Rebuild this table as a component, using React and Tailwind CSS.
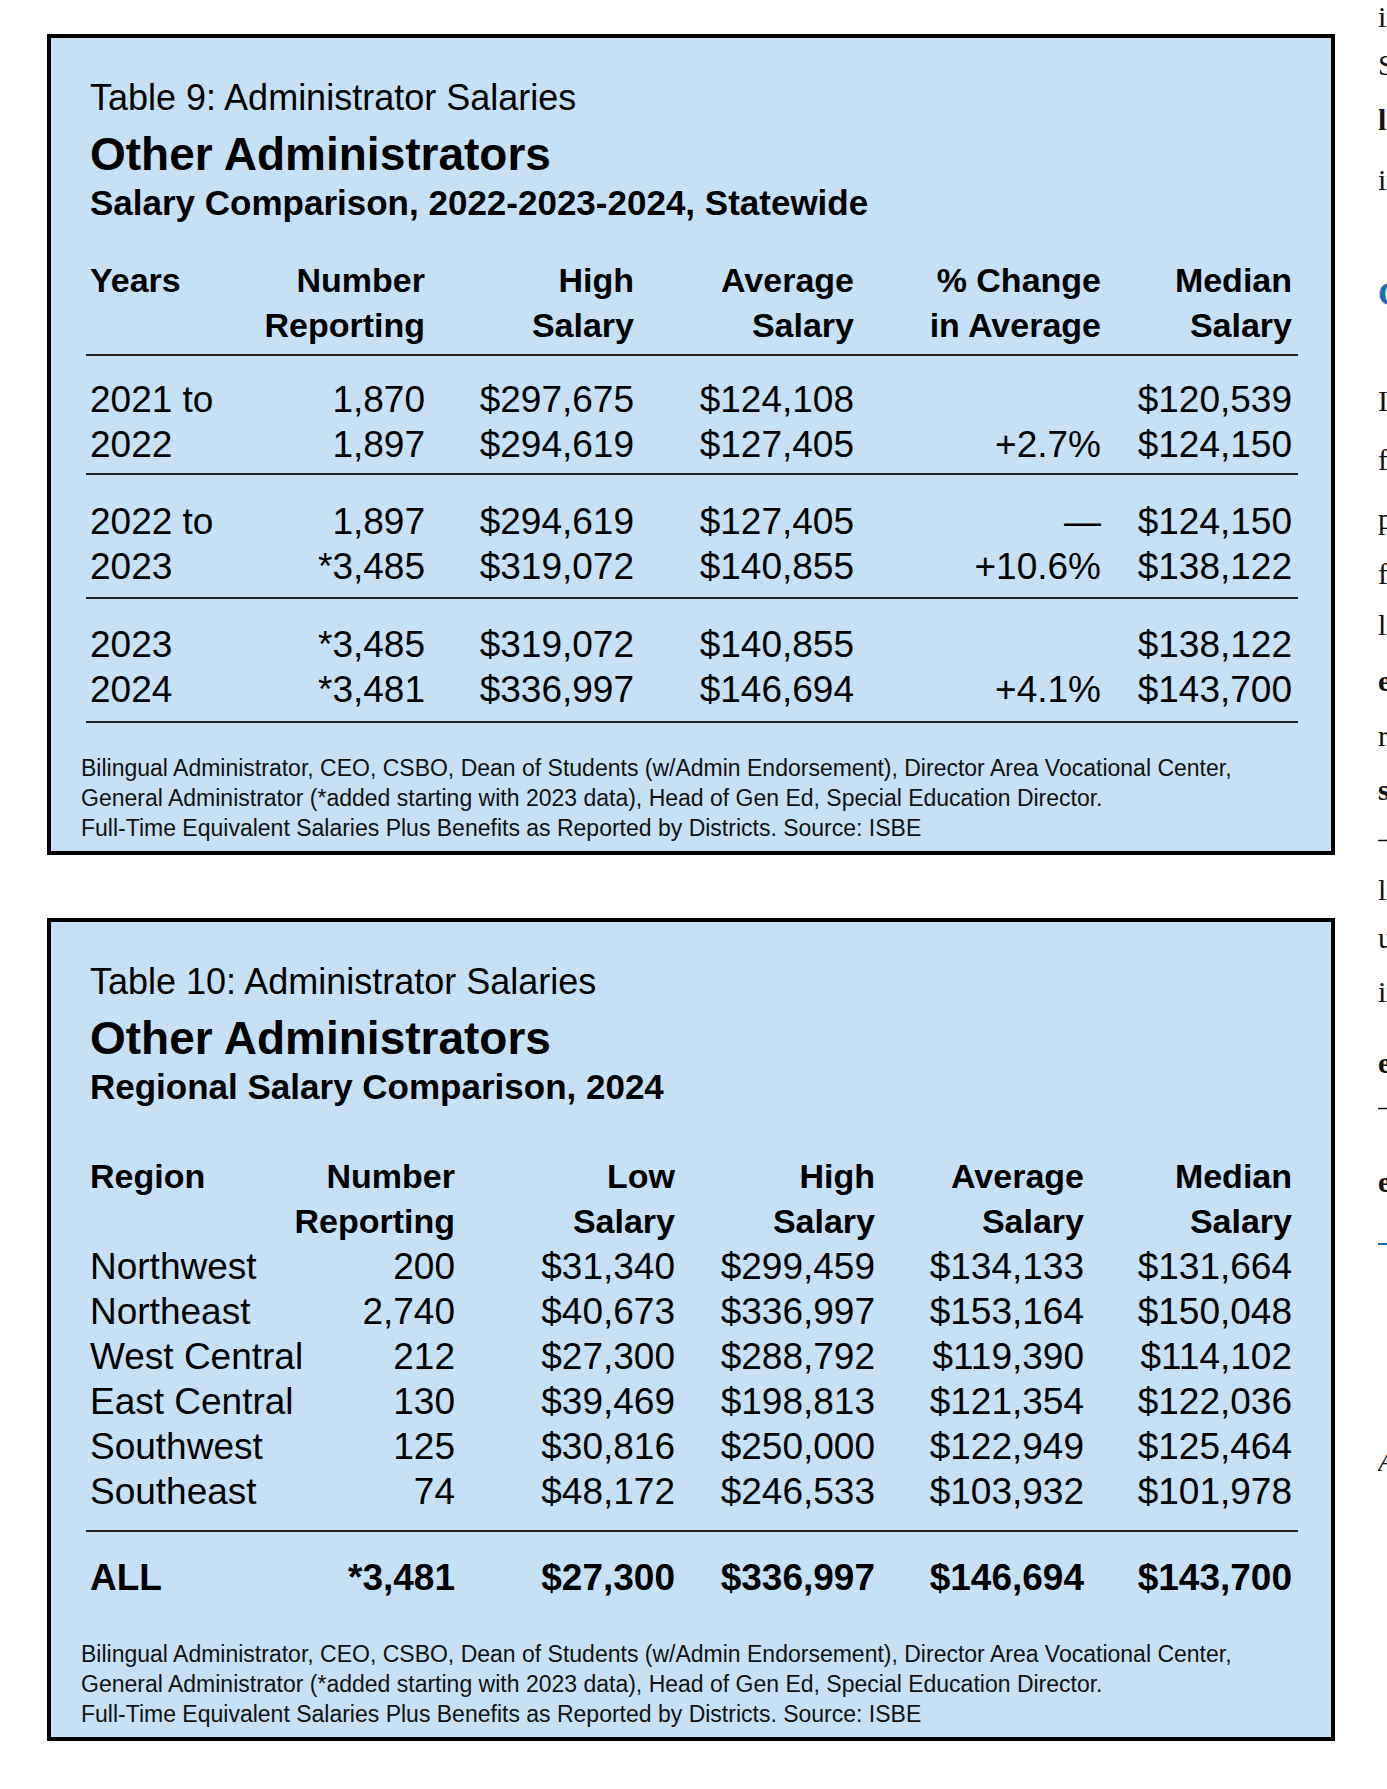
import React from "react";

const sans = { fontFamily: '"Liberation Sans", Arial, sans-serif' };

const t1Head = [
  ["Years", ""],
  ["Number", "Reporting"],
  ["High", "Salary"],
  ["Average", "Salary"],
  ["% Change", "in Average"],
  ["Median", "Salary"],
];

const t1Groups = [
  {
    cls: "pt-[21px] pb-[6px] border-b-2 border-[#222]",
    rows: [
      ["2021 to", "1,870", "$297,675", "$124,108", "", "$120,539"],
      ["2022", "1,897", "$294,619", "$127,405", "+2.7%", "$124,150"],
    ],
  },
  {
    cls: "pt-[24px] pb-[8px] border-b-2 border-[#222]",
    rows: [
      ["2022 to", "1,897", "$294,619", "$127,405", "—", "$124,150"],
      ["2023", "*3,485", "$319,072", "$140,855", "+10.6%", "$138,122"],
    ],
  },
  {
    cls: "pt-[23px] pb-[9px] border-b-2 border-[#222]",
    rows: [
      ["2023", "*3,485", "$319,072", "$140,855", "", "$138,122"],
      ["2024", "*3,481", "$336,997", "$146,694", "+4.1%", "$143,700"],
    ],
  },
];

const t2Head = [
  ["Region", ""],
  ["Number", "Reporting"],
  ["Low", "Salary"],
  ["High", "Salary"],
  ["Average", "Salary"],
  ["Median", "Salary"],
];

const t2Rows = [
  ["Northwest", "200", "$31,340", "$299,459", "$134,133", "$131,664"],
  ["Northeast", "2,740", "$40,673", "$336,997", "$153,164", "$150,048"],
  ["West Central", "212", "$27,300", "$288,792", "$119,390", "$114,102"],
  ["East Central", "130", "$39,469", "$198,813", "$121,354", "$122,036"],
  ["Southwest", "125", "$30,816", "$250,000", "$122,949", "$125,464"],
  ["Southeast", "74", "$48,172", "$246,533", "$103,932", "$101,978"],
];

const t2All = ["ALL", "*3,481", "$27,300", "$336,997", "$146,694", "$143,700"];

const grid1 = "grid grid-cols-[150px_185px_209px_220px_247px_191px]";
const grid2 = "grid grid-cols-[180px_185px_220px_200px_209px_208px]";

// clipped letters of the neighbouring text column
const sideLines = [
  { t: "in the", cls: "mt-[-3px]" },
  { t: "Salary", cls: "mt-[8px]" },
  { t: "ll the", cls: "mt-[15px] font-bold" },
  { t: "in the", cls: "mt-[20px]" },
  { t: "Co", cls: "mt-[74px] font-bold text-[#1b6db3] text-[34px]" },
  { t: "In the", cls: "mt-[67px]" },
  { t: "for the", cls: "mt-[19px]" },
  { t: "pay", cls: "mt-[19px]" },
  { t: "for", cls: "mt-[15px]" },
  { t: "le", cls: "mt-[11px]" },
  { t: "ea", cls: "mt-[16px] font-bold" },
  { t: "re", cls: "mt-[15px]" },
  { t: "sa", cls: "mt-[14px] font-bold" },
  { t: "– a", cls: "mt-[8px]" },
  { t: "le", cls: "mt-[12px]" },
  { t: "up", cls: "mt-[8px]" },
  { t: "in", cls: "mt-[14px]" },
  { t: "ea", cls: "mt-[31px] font-bold" },
  { t: "– a", cls: "mt-[3px]" },
  { t: "ea", cls: "mt-[36px] font-bold" },
];

function Titles({ label, sub }) {
  return (
    <div className="ml-[9px] text-black">
      <div className="text-[36px] leading-[40px] whitespace-nowrap">{label}</div>
      <div className="mt-[8px] text-[46px] leading-[56px] font-bold whitespace-nowrap">
        Other Administrators
      </div>
      <div className="text-[35px] leading-[42px] font-bold whitespace-nowrap">{sub}</div>
    </div>
  );
}

function Notes() {
  return (
    <div className="text-[23px] leading-[30px] text-[#111] whitespace-nowrap">
      <div>
        Bilingual Administrator, CEO, CSBO, Dean of Students (w/Admin Endorsement), Director Area
        Vocational Center,
      </div>
      <div>
        General Administrator (*added starting with 2023 data), Head of Gen Ed, Special Education
        Director.
      </div>
      <div>Full-Time Equivalent Salaries Plus Benefits as Reported by Districts. Source: ISBE</div>
    </div>
  );
}

function Row({ grid, cells, bold }) {
  return (
    <div className={`${grid} text-[37px] leading-[45px] ${bold ? "font-bold" : ""}`}>
      {cells.map((c, i) => (
        <div key={i} className={i === 0 ? "text-left whitespace-nowrap" : "text-right whitespace-nowrap"}>
          {c}
        </div>
      ))}
    </div>
  );
}

function Head({ grid, cols }) {
  return (
    <div className={`${grid} text-[34px] leading-[45px] font-bold`}>
      {cols.map((c, i) => (
        <div key={i} className={i === 0 ? "text-left whitespace-nowrap" : "text-right whitespace-nowrap"}>
          <div>{c[0]}</div>
          <div>{c[1] || "\u00a0"}</div>
        </div>
      ))}
    </div>
  );
}

export default function App() {
  return (
    <div className="w-[1387px] h-[1789px] bg-white overflow-hidden flex text-black" style={sans}>
      <div className="w-[1378px] shrink-0 pl-[47px] pt-[34px] flex flex-col">
        {/* Table 9 */}
        <div className="w-[1288px] border-4 border-black bg-[#c6e1f5] pl-[30px] pr-[33px] pt-[40px] pb-[8px]">
          <Titles label="Table 9: Administrator Salaries" sub="Salary Comparison, 2022-2023-2024, Statewide" />
          <div className="ml-[5px] mt-[34px]">
            <div className="pl-[4px] pr-[6px] pb-[6px] border-b-2 border-[#222]">
              <Head grid={grid1} cols={t1Head} />
            </div>
            {t1Groups.map((g, gi) => (
              <div key={gi} className={`pl-[4px] pr-[6px] ${g.cls}`}>
                {g.rows.map((r, ri) => (
                  <Row key={ri} grid={grid1} cells={r} />
                ))}
              </div>
            ))}
          </div>
          <div className="mt-[30px]">
            <Notes />
          </div>
        </div>

        {/* Table 10 */}
        <div className="mt-[63px] w-[1288px] border-4 border-black bg-[#c6e1f5] pl-[30px] pr-[33px] pt-[40px] pb-[8px]">
          <Titles label="Table 10: Administrator Salaries" sub="Regional Salary Comparison, 2024" />
          <div className="ml-[5px] mt-[46px]">
            <div className="pl-[4px] pr-[6px] pb-[16px] border-b-2 border-[#222]">
              <Head grid={grid2} cols={t2Head} />
              {t2Rows.map((r, ri) => (
                <Row key={ri} grid={grid2} cells={r} />
              ))}
            </div>
            <div className="pl-[4px] pr-[6px] pt-[23px]">
              <Row grid={grid2} cells={t2All} bold />
            </div>
          </div>
          <div className="mt-[39px]">
            <Notes />
          </div>
        </div>
      </div>

      {/* cut-off neighbouring column */}
      <div
        className="flex-1 overflow-hidden flex flex-col text-[30px] text-[#111]"
        style={{ fontFamily: '"Liberation Serif", "Times New Roman", serif' }}
      >
        {sideLines.map((l, i) => (
          <div key={i} className={`h-[40px] leading-[40px] whitespace-nowrap ${l.cls}`}>
            {l.t}
          </div>
        ))}
        <div className="mt-[41px] h-[2px] w-[20px] bg-[#1b6db3] shrink-0" />
        <div className="mt-[196px] h-[40px] leading-[40px] italic whitespace-nowrap">A the</div>
      </div>
    </div>
  );
}
